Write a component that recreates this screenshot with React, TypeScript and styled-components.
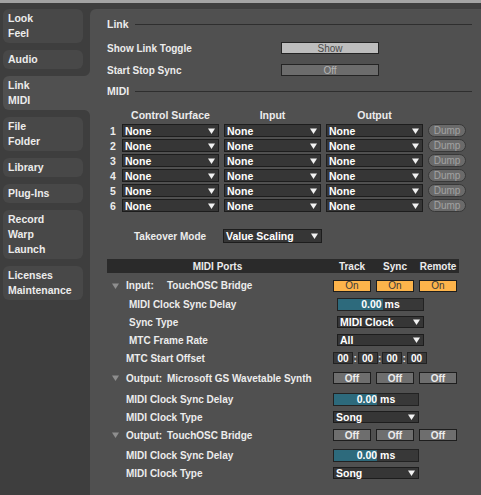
import React from 'react';
import styled, { createGlobalStyle, css } from 'styled-components';

const SIDEBAR_BG = '#3e3e3e';
const TAB_BG = '#484848';
const PANEL_BG = '#505050';

const GlobalStyle = createGlobalStyle`
  html, body {
    margin: 0;
    padding: 0;
    background: ${SIDEBAR_BG};
  }
  body {
    font-family: "Liberation Sans", Arial, sans-serif;
    font-size: 10px;
    font-weight: bold;
    color: #ececec;
  }
  * {
    box-sizing: border-box;
  }
`;

const Window = styled.div`
  width: 481px;
  height: 495px;
  overflow: hidden;
  display: flex;
  flex-direction: column;
`;

const TitleStrip = styled.div`
  height: 3px;
  flex-shrink: 0;
  background: #a3a3a3;
`;

const Body = styled.div`
  flex: 1;
  display: flex;
  padding-top: 6px;
  min-height: 0;
`;

const Sidebar = styled.nav`
  width: 90px;
  flex-shrink: 0;
  display: flex;
  flex-direction: column;
  gap: 7px;
  padding-left: 3px;
`;

const Tab = styled.div<{ $active?: boolean }>`
  position: relative;
  width: ${p => (p.$active ? '87px' : '80px')};
  padding: 2px 5px;
  line-height: 15px;
  font-size: 10.5px;
  background: ${p => (p.$active ? PANEL_BG : TAB_BG)};
  border-radius: ${p => (p.$active ? '6px 0 0 6px' : '6px')};

  ${p =>
    p.$active &&
    css`
      &::before,
      &::after {
        content: '';
        position: absolute;
        right: 0;
        width: 6px;
        height: 6px;
      }
      &::before {
        top: -6px;
        background: radial-gradient(circle at 0 0, ${SIDEBAR_BG} 5.5px, ${PANEL_BG} 6.5px);
      }
      &::after {
        bottom: -6px;
        background: radial-gradient(circle at 0 100%, ${SIDEBAR_BG} 5.5px, ${PANEL_BG} 6.5px);
      }
    `}
`;

const Panel = styled.main`
  flex: 1;
  background: ${PANEL_BG};
  border-top-left-radius: 6px;
  padding: 8px 9px 0 17px;
  display: flex;
  flex-direction: column;
`;

const SectionTitle = styled.div<{ $mt?: number }>`
  display: flex;
  align-items: center;
  gap: 6px;
  height: 14px;
  margin-top: ${p => p.$mt ?? 0}px;
  font-size: 10.5px;

  &::after {
    content: '';
    flex: 1;
    height: 1px;
    background: #2e2e2e;
  }
`;

const SettingList = styled.div`
  display: flex;
  flex-direction: column;
  gap: 8px;
  margin-top: 10px;
`;

const SettingRow = styled.div`
  display: flex;
  align-items: center;
  height: 14px;
`;

const SettingLabel = styled.span`
  width: 174px;
`;

const ToggleButton = styled.div<{ $on?: boolean }>`
  width: 98px;
  height: 12px;
  border: 1px solid #242424;
  background: ${p => (p.$on ? '#bdbdbd' : '#6c6c6c')};
  color: ${p => (p.$on ? '#4a4a4a' : '#b4b4b4')};
  font-weight: normal;
  font-size: 10px;
  display: flex;
  align-items: center;
  justify-content: center;
`;

const SurfaceGrid = styled.div`
  display: grid;
  grid-template-columns: 10px 97px 97px 97px 38px;
  grid-template-rows: 15px;
  grid-auto-rows: 13px;
  column-gap: 5px;
  row-gap: 2px;
  margin-top: 9px;
`;

const ColumnHead = styled.div`
  display: flex;
  align-items: center;
  justify-content: center;
  font-size: 10.5px;
`;

const RowNumber = styled.div`
  display: flex;
  align-items: center;
  justify-content: center;
  padding-left: 2px;
  font-size: 10.5px;
`;

const Select = styled.div<{ $w?: number; $h?: number; $ml?: number }>`
  width: ${p => (p.$w ? `${p.$w}px` : 'auto')};
  height: ${p => p.$h ?? 13}px;
  margin-left: ${p => p.$ml ?? 0}px;
  background: #363636;
  border: 1px solid #1d1d1d;
  color: #ffffff;
  display: flex;
  align-items: center;
  justify-content: space-between;
  padding: 0 3px 0 2px;
  font-size: 10.5px;
`;

const Caret = () => (
  <svg width="7" height="6" viewBox="0 0 7 6">
    <polygon points="0,0.5 7,0.5 3.5,6" fill="#f2f2f2" />
  </svg>
);

const DumpButton = styled.div`
  height: 13px;
  border-radius: 7px;
  border: 1px solid #383838;
  background: #6a6a6a;
  color: #a2a2a2;
  font-weight: normal;
  font-size: 10px;
  display: flex;
  align-items: center;
  justify-content: center;
`;

const TakeoverRow = styled.div`
  display: flex;
  align-items: center;
  margin-top: 17px;
  padding-left: 27px;
  height: 14px;
`;

const TakeoverLabel = styled.span`
  width: 89px;
`;

const PortsTable = styled.div`
  width: 352px;
  margin-top: 16px;
  display: flex;
  flex-direction: column;
`;

const PortsHead = styled.div`
  display: grid;
  grid-template-columns: 221px 38px 38px 38px;
  column-gap: 5px;
  height: 14px;
  background: #2a2a2a;
  align-items: center;
  margin-bottom: 3px;
`;

const HeadCell = styled.span`
  text-align: center;
  white-space: nowrap;
`;

const PortRow = styled.div<{ $h: number }>`
  display: grid;
  grid-template-columns: 226px 1fr;
  align-items: center;
  height: ${p => p.$h}px;
`;

const PortLabel = styled.div<{ $indent: number }>`
  display: flex;
  align-items: center;
  padding-left: ${p => p.$indent}px;
  white-space: nowrap;
`;

const Disclosure = styled.span`
  width: 14px;
  display: flex;
  align-items: center;
`;

const PortKind = styled.span`
  width: 41px;
`;

const Switches = styled.div`
  display: flex;
  gap: 5px;
`;

const Switch = styled.div<{ $on?: boolean }>`
  width: 38px;
  height: 12px;
  border: 1px solid #1e1e1e;
  background: ${p => (p.$on ? '#fdb44b' : '#6e6e6e')};
  color: ${p => (p.$on ? '#3a3a3a' : '#ececec')};
  font-weight: ${p => (p.$on ? 'normal' : 'bold')};
  display: flex;
  align-items: center;
  justify-content: center;
`;

const Slider = styled.div<{ $w: number; $ml?: number }>`
  position: relative;
  width: ${p => p.$w}px;
  height: 13px;
  margin-left: ${p => p.$ml ?? 0}px;
  border: 1px solid #222;
  background: #383838;
  display: flex;
  align-items: center;
  justify-content: center;
  color: #fff;
  font-size: 10.5px;
  overflow: hidden;
`;

const SliderFill = styled.div`
  position: absolute;
  left: 0;
  top: 0;
  bottom: 0;
  background: #2d6a7c;
`;

const SliderText = styled.span`
  position: relative;
`;

const TimeFields = styled.div`
  display: flex;
  align-items: center;
`;

const TimeField = styled.div`
  width: 20px;
  height: 12px;
  border: 1px solid #222;
  background: #3a3a3a;
  color: #fff;
  display: flex;
  align-items: center;
  justify-content: center;
`;

const Colon = styled.span`
  width: 4.5px;
  text-align: center;
`;

const DisclosureIcon = () => (
  <svg width="7" height="6" viewBox="0 0 7 6">
    <polygon points="0,0.5 7,0.5 3.5,6" fill="#8e8e8e" />
  </svg>
);

const tabs: { lines: string[]; active?: boolean }[] = [
  { lines: ['Look', 'Feel'] },
  { lines: ['Audio'] },
  { lines: ['Link', 'MIDI'], active: true },
  { lines: ['File', 'Folder'] },
  { lines: ['Library'] },
  { lines: ['Plug-Ins'] },
  { lines: ['Record', 'Warp', 'Launch'] },
  { lines: ['Licenses', 'Maintenance'] },
];

const DelaySlider: React.FC<{ w: number; ml?: number; value: number }> = ({ w, ml, value }) => (
  <Slider $w={w} $ml={ml}>
    <SliderFill style={{ width: `${value * 100}%` }} />
    <SliderText>0.00 ms</SliderText>
  </Slider>
);

const App: React.FC = () => {
  return (
    <>
      <GlobalStyle />
      <Window>
        <TitleStrip />
        <Body>
          <Sidebar>
            {tabs.map(t => (
              <Tab key={t.lines.join()} $active={t.active}>
                {t.lines.map(l => (
                  <div key={l}>{l}</div>
                ))}
              </Tab>
            ))}
          </Sidebar>

          <Panel>
            <SectionTitle>Link</SectionTitle>
            <SettingList>
              <SettingRow>
                <SettingLabel>Show Link Toggle</SettingLabel>
                <ToggleButton $on>Show</ToggleButton>
              </SettingRow>
              <SettingRow>
                <SettingLabel>Start Stop Sync</SettingLabel>
                <ToggleButton>Off</ToggleButton>
              </SettingRow>
            </SettingList>

            <SectionTitle $mt={7}>MIDI</SectionTitle>
            <SurfaceGrid>
              <span />
              <ColumnHead>Control Surface</ColumnHead>
              <ColumnHead>Input</ColumnHead>
              <ColumnHead>Output</ColumnHead>
              <span />
              {[1, 2, 3, 4, 5, 6].map(n => (
                <React.Fragment key={n}>
                  <RowNumber>{n}</RowNumber>
                  <Select>None<Caret /></Select>
                  <Select>None<Caret /></Select>
                  <Select>None<Caret /></Select>
                  <DumpButton>Dump</DumpButton>
                </React.Fragment>
              ))}
            </SurfaceGrid>

            <TakeoverRow>
              <TakeoverLabel>Takeover Mode</TakeoverLabel>
              <Select $w={99} $h={14}>Value Scaling<Caret /></Select>
            </TakeoverRow>

            <PortsTable>
              <PortsHead>
                <HeadCell>MIDI Ports</HeadCell>
                <HeadCell>Track</HeadCell>
                <HeadCell>Sync</HeadCell>
                <HeadCell>Remote</HeadCell>
              </PortsHead>

              <PortRow $h={19}>
                <PortLabel $indent={5}>
                  <Disclosure><DisclosureIcon /></Disclosure>
                  <PortKind>Input:</PortKind>
                  TouchOSC Bridge
                </PortLabel>
                <Switches>
                  <Switch $on>On</Switch>
                  <Switch $on>On</Switch>
                  <Switch $on>On</Switch>
                </Switches>
              </PortRow>
              <PortRow $h={18}>
                <PortLabel $indent={22}>MIDI Clock Sync Delay</PortLabel>
                <DelaySlider w={87} ml={4} value={0.53} />
              </PortRow>
              <PortRow $h={18}>
                <PortLabel $indent={22}>Sync Type</PortLabel>
                <Select $w={87} $ml={4} $h={12}>MIDI Clock<Caret /></Select>
              </PortRow>
              <PortRow $h={18}>
                <PortLabel $indent={22}>MTC Frame Rate</PortLabel>
                <Select $w={87} $ml={4} $h={12}>All<Caret /></Select>
              </PortRow>
              <PortRow $h={18}>
                <PortLabel $indent={19}>MTC Start Offset</PortLabel>
                <TimeFields>
                  <TimeField>00</TimeField>
                  <Colon>:</Colon>
                  <TimeField>00</TimeField>
                  <Colon>:</Colon>
                  <TimeField>00</TimeField>
                  <Colon>:</Colon>
                  <TimeField>00</TimeField>
                </TimeFields>
              </PortRow>

              <PortRow $h={22}>
                <PortLabel $indent={5}>
                  <Disclosure><DisclosureIcon /></Disclosure>
                  <PortKind>Output:</PortKind>
                  Microsoft GS Wavetable Synth
                </PortLabel>
                <Switches>
                  <Switch>Off</Switch>
                  <Switch>Off</Switch>
                  <Switch>Off</Switch>
                </Switches>
              </PortRow>
              <PortRow $h={20}>
                <PortLabel $indent={19}>MIDI Clock Sync Delay</PortLabel>
                <DelaySlider w={86} value={0.51} />
              </PortRow>
              <PortRow $h={16}>
                <PortLabel $indent={19}>MIDI Clock Type</PortLabel>
                <Select $w={86} $h={12}>Song<Caret /></Select>
              </PortRow>

              <PortRow $h={20}>
                <PortLabel $indent={5}>
                  <Disclosure><DisclosureIcon /></Disclosure>
                  <PortKind>Output:</PortKind>
                  TouchOSC Bridge
                </PortLabel>
                <Switches>
                  <Switch>Off</Switch>
                  <Switch>Off</Switch>
                  <Switch>Off</Switch>
                </Switches>
              </PortRow>
              <PortRow $h={20}>
                <PortLabel $indent={19}>MIDI Clock Sync Delay</PortLabel>
                <DelaySlider w={86} value={0.51} />
              </PortRow>
              <PortRow $h={16}>
                <PortLabel $indent={19}>MIDI Clock Type</PortLabel>
                <Select $w={86} $h={12}>Song<Caret /></Select>
              </PortRow>
            </PortsTable>
          </Panel>
        </Body>
      </Window>
    </>
  );
};

export default App;
